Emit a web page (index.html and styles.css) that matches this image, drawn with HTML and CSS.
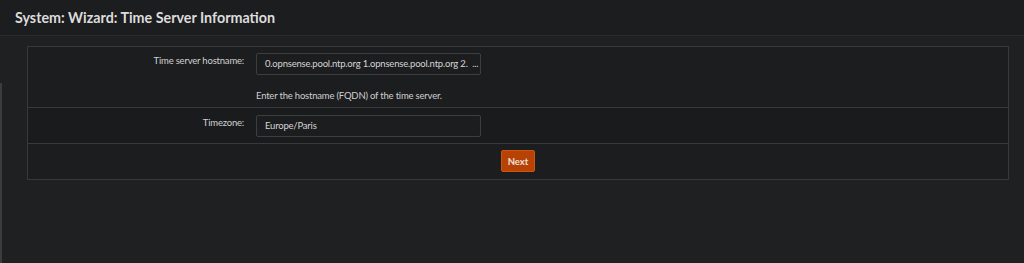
FILE: index.html
```html
<!DOCTYPE html>
<html lang="en">
<head>
    <meta charset="UTF-8">
    <meta name="viewport" content="width=device-width, initial-scale=1.0">
    <title>System: Wizard: Time Server Information</title>
    <link rel="stylesheet" href="styles.css">
</head>
<body>
    <div class="sidebar-edge"></div>

    <header class="page-head">
        <h1>System: Wizard: Time Server Information</h1>
    </header>

    <main class="page-content">
        <div class="wizard-box">
            <div class="wizard-row">
                <div class="wizard-label">Time server hostname:</div>
                <div class="wizard-field">
                    <div class="text-input">0.opnsense.pool.ntp.org 1.opnsense.pool.ntp.org 2.&nbsp; ...</div>
                    <div class="help-text">Enter the hostname (FQDN) of the time server.</div>
                </div>
            </div>
            <div class="wizard-row row-alt">
                <div class="wizard-label">Timezone:</div>
                <div class="wizard-field">
                    <div class="text-input">Europe/Paris</div>
                </div>
            </div>
            <div class="wizard-row">
                <div class="wizard-label"></div>
                <div class="wizard-field action-field">
                    <button class="btn-next" type="button">Next</button>
                </div>
            </div>
        </div>
    </main>
</body>
</html>
```

FILE: styles.css
```css
body {
    margin: 0;
    background: #1f2022;
    color: #d6d6d6;
    font-family: Lato, "Noto Sans", sans-serif;
    font-size: 9.5px;
    letter-spacing: -0.2px;
    height: 263px;
    overflow: hidden;
    position: relative;
}

.sidebar-edge {
    position: absolute;
    left: 0;
    top: 83px;
    width: 2px;
    height: 180px;
    background: #3c3c3a;
}

.page-head {
    height: 35px;
    background: #1c1d1f;
    border-bottom: 1px solid #2a2b2d;
    padding: 0 15px;
    display: flex;
    align-items: center;
}

.page-head h1 {
    margin: 0;
    font-size: 14.3px;
    font-weight: 700;
    letter-spacing: 0;
    color: #dcdcdc;
}

.page-content {
    padding: 10px 14px 0 27px;
}

.wizard-box {
    width: 980px;
    border: 1px solid #38393b;
    background: #1c1d1f;
}

.wizard-row {
    display: flex;
    border-top: 1px solid #38393b;
}

.wizard-row:first-child {
    border-top: none;
}

.row-alt {
    background: #1a1b1d;
}

.wizard-label {
    width: 216px;
    text-align: right;
    padding: 8px 12px 0 0;
    color: #d0d0d0;
}

.wizard-field {
    padding: 6px 0 5px 0;
}

.row-alt .wizard-field {
    padding: 7px 0 6px 0;
}

.row-alt .wizard-label {
    padding-top: 9px;
}

.text-input {
    width: 215px;
    height: 20px;
    line-height: 20px;
    border: 1px solid #3d3e40;
    border-radius: 2px;
    background: #1c1d1f;
    padding: 0 0 0 8px;
    color: #d4d4d4;
    white-space: nowrap;
    overflow: hidden;
}

.help-text {
    height: 13px;
    line-height: 13px;
    padding: 14px 0 0 0;
    color: #cfcfcf;
}

.action-field {
    padding: 6px 0 7px 245px;
}

.btn-next {
    font-family: inherit;
    font-size: 9.5px;
    font-weight: 700;
    letter-spacing: 0;
    color: #f0e0d6;
    background: #b64206;
    border: 1px solid #d2540e;
    border-radius: 2px;
    height: 22px;
    width: 34px;
    padding: 0;
}
```
